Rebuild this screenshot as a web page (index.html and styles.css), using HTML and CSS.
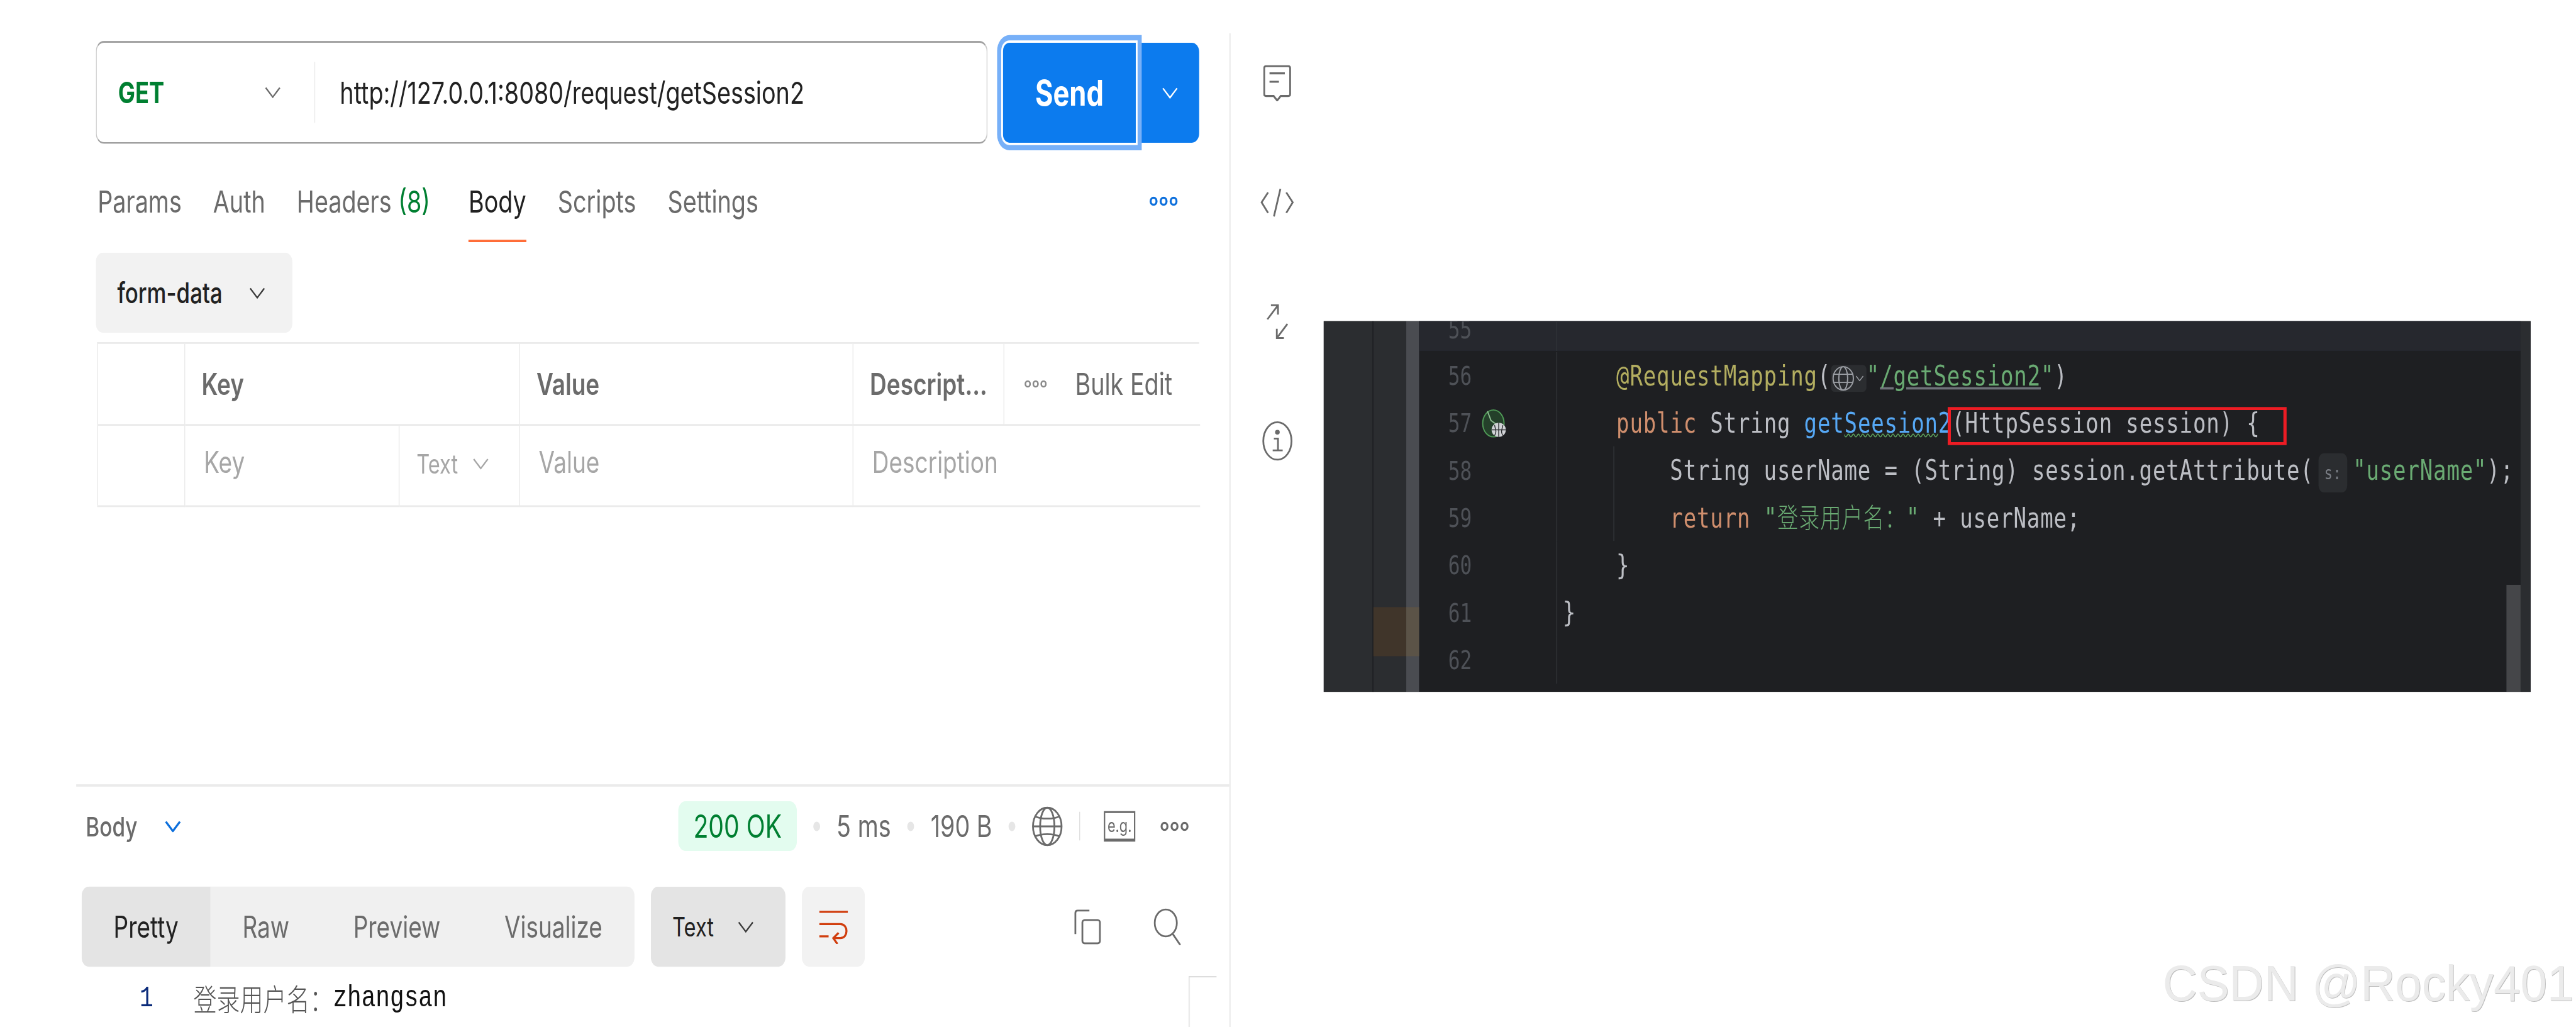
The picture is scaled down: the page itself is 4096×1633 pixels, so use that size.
FILE: index.html
```html
<!DOCTYPE html>
<html lang="zh">
<head>
<meta charset="utf-8">
<title>Postman request and IDE code</title>
<link rel="stylesheet" href="styles.css">
</head>
<body>
<div class="stage">
  <div class="sheet">
    <main class="left">
      <section class="request">
        <div class="urlbar">
          <div class="method"><span class="get">GET</span><svg class="chev" viewBox="0 0 28 20" preserveAspectRatio="none"><path d="M2 2 14 18 26 2"/></svg></div>
          <div class="url">http://127.0.0.1:8080/request/getSession2</div>
        </div>
        <div class="send-group">
          <button class="send">Send</button>
          <button class="send-caret"><svg class="chev chev-white" viewBox="0 0 28 20" preserveAspectRatio="none"><path d="M2 2 14 18 26 2"/></svg></button>
        </div>
      </section>

      <nav class="tabs">
        <span class="tab">Params</span>
        <span class="tab">Auth</span>
        <span class="tab tab-headers">Headers <span class="count">(8)</span></span>
        <span class="tab tab-active">Body</span>
        <span class="tab">Scripts</span>
        <span class="tab">Settings</span>
        <svg class="dots dots-blue tabs-more" viewBox="0 0 48 16" preserveAspectRatio="none"><ellipse cx="7" cy="8" rx="5" ry="6"/><ellipse cx="24" cy="8" rx="5" ry="6"/><ellipse cx="41" cy="8" rx="5" ry="6"/></svg>
      </nav>

      <div class="formdata"><span>form-data</span><svg class="chev chev-dark" viewBox="0 0 28 20" preserveAspectRatio="none"><path d="M2 2 14 18 26 2"/></svg></div>

      <div class="kv">
        <div class="cell"></div>
        <div class="cell span2 head">Key</div>
        <div class="cell head">Value</div>
        <div class="cell head">Descript...</div>
        <div class="cell bulk"><svg class="dots dots-small" viewBox="0 0 48 16" preserveAspectRatio="none"><ellipse cx="7" cy="8" rx="5" ry="6"/><ellipse cx="24" cy="8" rx="5" ry="6"/><ellipse cx="41" cy="8" rx="5" ry="6"/></svg><span>Bulk Edit</span></div>
        <div class="cell"></div>
        <div class="cell ph">Key</div>
        <div class="cell ph-type"><span>Text</span><svg class="chev chev-light" viewBox="0 0 28 20" preserveAspectRatio="none"><path d="M2 2 14 18 26 2"/></svg></div>
        <div class="cell ph">Value</div>
        <div class="cell span2 ph">Description</div>
      </div>

      <section class="response">
        <div class="status-row">
          <span class="res-body">Body</span>
          <svg class="chev chev-blue" viewBox="0 0 28 20" preserveAspectRatio="none"><path d="M2 2 14 18 26 2"/></svg>
          <div class="status">
            <span class="pill">200 OK</span>
            <i class="sep-dot"></i>
            <span>5 ms</span>
            <i class="sep-dot"></i>
            <span>190 B</span>
            <i class="sep-dot"></i>
            <svg class="globe" viewBox="0 0 52 68" preserveAspectRatio="none"><ellipse cx="26" cy="34" rx="24" ry="32"/><ellipse cx="26" cy="34" rx="12" ry="32"/><path d="M6 17C16 22 36 22 46 17M6 51C16 46 36 46 46 51M2 34H50"/></svg>
            <i class="vsep"></i>
            <span class="eg">e.g.</span>
            <svg class="dots dots-gray" viewBox="0 0 48 16" preserveAspectRatio="none"><ellipse cx="7" cy="8" rx="5" ry="6"/><ellipse cx="24" cy="8" rx="5" ry="6"/><ellipse cx="41" cy="8" rx="5" ry="6"/></svg>
          </div>
        </div>
        <div class="toolbar">
          <div class="modes">
            <span class="mode mode-active">Pretty</span>
            <span class="mode">Raw</span>
            <span class="mode">Preview</span>
            <span class="mode">Visualize</span>
          </div>
          <div class="lang"><span>Text</span><svg class="chev chev-dark" viewBox="0 0 28 20" preserveAspectRatio="none"><path d="M2 2 14 18 26 2"/></svg></div>
          <div class="wrap-btn"><svg class="wrap-icon" viewBox="0 0 49 59" preserveAspectRatio="none"><path d="M0 4H49M0 25H36C50 25 50 49 36 49H24M33 40 24 49 31 59M0 46H16"/></svg></div>
          <svg class="copy" viewBox="0 0 46 60" preserveAspectRatio="none"><path d="M26 2H6C3 2 2 4 2 6V42"/><rect x="14" y="18" width="30" height="40" rx="4"/></svg>
          <svg class="search" viewBox="0 0 47 63" preserveAspectRatio="none"><ellipse cx="21" cy="25" rx="19" ry="23"/><path d="M33 44 46 63"/></svg>
        </div>
        <div class="output">
          <span class="ln">1</span><span class="out-cjk">登录用户名：</span><span class="out-text">zhangsan</span>
        </div>
        <i class="corner"></i>
      </section>
    </main>

    <aside class="side">
      <div class="side-cell"><svg class="i-comment" viewBox="0 0 48 56" preserveAspectRatio="none"><path d="M5 2H43C45 2 46 3 46 5V45C46 47 45 48 43 48H30L24 55 18 48H5C3 48 2 47 2 45V5C2 3 3 2 5 2ZM11 13H37M11 26H27"/></svg></div>
      <div class="side-cell"><svg class="i-code" viewBox="0 0 59 51" preserveAspectRatio="none"><path d="M14 8 3 25 14 43M45 8 56 25 45 43M35 2 24 49"/></svg></div>
      <div class="side-cell"><svg class="i-expand" viewBox="0 0 38 60" preserveAspectRatio="none"><path d="M2 26 20 2M8 2H20V18M36 34 18 58M30 58H18V42"/></svg></div>
      <div class="side-cell"><svg class="i-info" viewBox="0 0 52 68" preserveAspectRatio="none"><ellipse cx="26" cy="34" rx="24" ry="32"/><path d="M20 30H27V50M18 50H35"/><circle cx="26" cy="19" r="2.5"/></svg></div>
    </aside>

    <section class="ide">
      <div class="ide-tool"></div>
      <div class="ide-gut"><div class="mark-a"></div></div>
      <div class="ide-fold"><div class="mark-b"></div></div>
      <div class="editor">
        <div class="row row-current"><span class="num">55</span><span class="code"></span></div>
        <div class="row"><span class="num">56</span><span class="code">    <span class="ann">@RequestMapping</span>(<span class="chip"><svg class="chip-globe" viewBox="0 0 36 44" preserveAspectRatio="none"><ellipse cx="18" cy="22" rx="16" ry="20"/><ellipse cx="18" cy="22" rx="7" ry="20"/><path d="M2 15H34M2 29H34"/></svg><svg class="chip-chev" viewBox="0 0 28 20" preserveAspectRatio="none"><path d="M2 2 14 18 26 2"/></svg></span><span class="str">"<span class="link">/getSession2</span>"</span>)</span></div>
        <div class="row"><span class="num">57<svg class="run" viewBox="0 0 40 50" preserveAspectRatio="none"><ellipse class="run-c" cx="20" cy="25" rx="18" ry="23"/><path class="run-l" d="M10 4 16 20 30 30"/><circle class="run-g" cx="29" cy="36" r="12"/><path class="run-k" d="M17 36H41M29 24V48M22 28C25 40 25 40 22 46M36 28C33 40 33 40 36 46"/></svg></span><span class="code">    <span class="kw">public</span> String <span class="fn">get<span class="wavy">Seesion</span>2</span>(HttpSession session) {</span></div>
        <div class="row"><span class="num">58</span><span class="code">        String userName = (String) session.getAttribute(<span class="hint">s:</span><span class="str">"userName"</span>);</span></div>
        <div class="row"><span class="num">59</span><span class="code">        <span class="kw">return</span> <span class="str">"<span class="code-cjk">登录用户名：</span>"</span> + userName;</span></div>
        <div class="row"><span class="num">60</span><span class="code">    }</span></div>
        <div class="row"><span class="num">61</span><span class="code">}</span></div>
        <div class="row"><span class="num">62</span><span class="code"></span></div>
        <i class="scroll-thumb"></i>
      </div>
      <div class="ide-strip"></div>
      <i class="guide"></i>
      <i class="redbox"></i>
    </section>
  </div>
  <div class="watermark">CSDN @Rocky401</div>
</div>
</body>
</html>
```

FILE: styles.css
```css
* { box-sizing: border-box; }
html, body { margin: 0; padding: 0; background: #fff; overflow: hidden; }
.stage { position: relative; width: 4096px; height: 1633px; overflow: hidden; background: #fff; }

/* the capture is squeezed horizontally: lay out at natural width, then scale the sheet */
.sheet {
  display: flex;
  width: 5648px;
  height: 1756px;
  transform: scale(0.72528, 0.92995);
  transform-origin: 0 0;
  font-family: Inter, "Noto Sans CJK SC", sans-serif;
  font-size: 52px;
  color: #6b6b6b;
}

svg { display: block; fill: none; stroke: #6b6b6b; stroke-width: 3; flex: none; }

.chev { width: 36px; height: 20px; stroke-width: 2.5; }
.chev-white { stroke: #fff; }
.chev-dark { stroke: #3a3a3a; }
.chev-light { stroke: #a6a6a6; }
.chev-blue { stroke: #0c6fdc; stroke-width: 3.5; }

.dots { width: 62px; height: 16px; stroke-width: 3.5; }
.dots-blue { stroke: #0c6fdc; }
.dots-small { stroke: #8a8a8a; width: 49px; height: 13px; }
.dots-gray { stroke: #6b6b6b; }

/* left column */
.left {
  width: 2698px;
  height: 1699px;
  margin-top: 57px;
  padding-top: 13px;
  border-right: 3px solid #ebebeb;
  display: flex;
  flex-direction: column;
  flex: none;
}

.request { display: flex; gap: 34px; margin-left: 210px; width: 2419px; height: 176px; }
.urlbar {
  display: flex;
  align-items: center;
  width: 1955px;
  height: 176px;
  border: 2px solid #c8c8c8;
  border-top: 3px solid #a0a0a0;
  border-bottom: 3px solid #a0a0a0;
  border-radius: 18px;
}
.method {
  display: flex;
  align-items: center;
  justify-content: space-between;
  width: 479px;
  height: 104px;
  padding: 0 73px 0 47px;
  border-right: 2px solid #ebebeb;
}
.get { color: #007f31; font-weight: 700; font-size: 50px; }
.url { padding-left: 54px; color: #212121; font-size: 52px; white-space: nowrap; }

.send-group { display: flex; gap: 11px; padding-top: 3px; }
.send {
  position: relative;
  z-index: 1;
  width: 291px;
  height: 171px;
  border: 0;
  border-radius: 14px 0 0 14px;
  background: #0c7bee;
  color: #fff;
  font: 700 60px Inter, sans-serif;
  box-shadow: 0 0 0 4px #fff, 0 0 0 13px #77b0f8;
}
.send-caret {
  display: flex;
  align-items: center;
  justify-content: center;
  width: 128px;
  height: 171px;
  padding: 0 0 0 0;
  border: 0;
  border-radius: 0 16px 16px 0;
  background: #0c7bee;
}

.tabs { display: flex; align-items: flex-start; gap: 69px; margin: 38px 0 0 214px; padding-right: 113px; height: 130px; }
.tab { height: 130px; padding-top: 31px; line-height: 60px; white-space: nowrap; border-bottom: 4px solid transparent; }
.tab-headers { margin-right: 15px; }
.tab-active { color: #212121; border-bottom-color: #ff6c37; }
.count { color: #007f31; }
.tabs-more { margin: 52px 0 0 auto; }

.formdata {
  display: flex;
  align-items: center;
  gap: 58px;
  width: 431px;
  height: 137px;
  margin: 18px 0 0 210px;
  padding-left: 47px;
  border-radius: 16px;
  background: #f2f2f2;
  color: #212121;
  font-size: 48px;
  font-weight: 500;
}

.kv {
  display: grid;
  grid-template-columns: 191px 470px 264px 731px 331px 429px;
  grid-template-rows: 140px 139px;
  width: 2416px;
  margin: 16px 0 0 213px;
  border-top: 3px solid #ebebeb;
  border-left: 2px solid #ebebeb;
}
.cell {
  display: flex;
  align-items: center;
  padding-left: 36px;
  border-right: 2px solid #ebebeb;
  border-bottom: 3px solid #ebebeb;
  white-space: nowrap;
}
.cell:nth-child(5), .cell:last-child { border-right: 0; }
.span2 { grid-column: span 2; }
.head { font-weight: 600; font-size: 51px; }
.bulk { gap: 62px; padding-left: 44px; }
.ph { padding: 0 0 12px 41px; color: #a6a6a6; font-size: 51px; }
.ph-type { padding: 0 0 6px 37px; gap: 32px; color: #a6a6a6; font-size: 45px; }

/* response */
.response {
  position: relative;
  height: 415px;
  margin: auto 0 0 167px;
  padding: 25px 89px 0 0;
  border-top: 4px solid #ebebeb;
}
.status-row { display: flex; align-items: center; height: 85px; }
.res-body { margin-left: 21px; font-size: 46px; font-weight: 500; }
.status-row > .chev { margin-left: 60px; }
.status { display: flex; align-items: center; gap: 36px; margin-left: auto; font-size: 52px; }
.pill {
  display: flex;
  align-items: center;
  justify-content: center;
  width: 260px;
  height: 85px;
  border-radius: 16px;
  background: #e3fcef;
  color: #007f31;
  font-size: 54px;
}
.sep-dot { width: 15px; height: 16px; border-radius: 50%; background: #e6e6e6; }
.globe { width: 68px; height: 68px; stroke-width: 3; }
.vsep { width: 2px; height: 49px; background: #e0e0e0; margin-right: 16px; }
.eg {
  display: flex;
  align-items: center;
  justify-content: center;
  width: 69px;
  height: 52px;
  border: 3px solid #6b6b6b;
  border-bottom-width: 5px;
  font-size: 30px;
  margin-right: 19px;
}

.toolbar { display: flex; align-items: center; gap: 36px; height: 137px; margin: 61px -89px 0 12px; padding-right: 106px; }
.modes { display: flex; width: 1212px; height: 137px; background: #f0f0f0; border-radius: 16px; overflow: hidden; flex: none; }
.mode { display: flex; align-items: center; padding: 0 70px; white-space: nowrap; font-size: 51px; }
.mode-active { background: #e4e4e4; color: #212121; }
.lang {
  display: flex;
  align-items: center;
  gap: 52px;
  width: 295px;
  height: 137px;
  padding-left: 47px;
  border-radius: 16px;
  background: #e4e4e4;
  color: #212121;
  font-size: 45px;
  flex: none;
}
.wrap-btn { display: flex; align-items: center; justify-content: center; width: 138px; height: 137px; border-radius: 16px; background: #f2f2f2; flex: none; }
.wrap-icon { width: 63px; height: 59px; stroke: #d13e0e; stroke-width: 3.5; }
.copy { width: 59px; height: 60px; margin-left: auto; stroke-width: 3; }
.search { width: 60px; height: 63px; margin-left: 79px; stroke-width: 3; }

.output { display: flex; align-items: center; height: 60px; margin: 23px 0 0 139px; white-space: nowrap; }
.ln { width: 118px; font: 50px "Liberation Mono", monospace; color: #0a2a7a; }
.out-cjk { font: 300 51px "Noto Sans CJK SC", sans-serif; color: #555; }
.out-text { font: 52px "Liberation Mono", monospace; color: #111; }
.corner { position: absolute; left: 2439px; top: 324px; width: 61px; height: 100px; border-top: 2px solid #dcdcdc; border-left: 2px solid #dcdcdc; }

/* icon rail */
.side { width: 204px; padding-top: 40px; flex: none; }
.side-cell { display: flex; align-items: center; justify-content: center; height: 204px; }
.i-comment { width: 62px; height: 62px; }
.i-code { width: 76px; height: 51px; }
.i-expand { width: 49px; height: 60px; }
.i-info { width: 67px; height: 68px; }
.i-info circle { fill: #6b6b6b; }

/* IDE shot */
.ide {
  position: relative;
  display: flex;
  width: 2646px;
  height: 634px;
  margin-top: 549px;
  overflow: hidden;
  background: #1e1f22;
  flex: none;
}
.ide-tool { width: 109px; background: #2b2d30; border-right: 2px solid #1a1b1e; flex: none; }
.ide-gut { position: relative; width: 72px; background: #2b2d30; flex: none; }
.ide-fold { position: relative; width: 28px; background: #4a4c51; flex: none; }
.mark-a, .mark-b { position: absolute; left: 0; right: 0; top: 489px; height: 84px; }
.mark-a { background: #40352a; }
.mark-b { background: #5b5347; }
.editor { position: relative; flex: 1; margin-top: -22px; padding-top: 0; }
.ide-strip { width: 22px; background: #2b2d30; flex: none; }

.row { display: flex; height: 81px; align-items: center; white-space: pre; }
.row-current { height: 73px; margin-bottom: 2px; background: #26282e; }
.num {
  display: flex;
  align-items: center;
  width: 303px;
  height: 100%;
  padding-left: 64px;
  border-right: 2px solid #313438;
  color: #4e5157;
  font: 43px "DejaVu Sans Mono", monospace;
  flex: none;
}
.code {
  padding-left: 12px;
  color: #bcbec4;
  font: 47px/81px "DejaVu Sans Mono", "Noto Sans CJK SC", monospace;
  letter-spacing: 1.1px;
  white-space: pre;
  height: 81px;
}
.ann { color: #b3ae60; }
.kw { color: #cf8e6d; }
.fn { color: #56a8f5; }
.str { color: #6aab73; }
.link { text-decoration: underline; text-decoration-color: #6f737a; }
.wavy { text-decoration: underline wavy #5a9e5a 2px; }
.chip {
  display: inline-flex;
  align-items: center;
  gap: 2px;
  width: 78px;
  height: 46px;
  padding: 0 2px;
  vertical-align: middle;
  border-radius: 8px;
  background: #2b2d30;
}
.chip-globe { width: 50px; height: 44px; stroke: #9a9da3; stroke-width: 2; }
.chip-chev { width: 18px; height: 10px; stroke: #9a9da3; stroke-width: 3; }
.hint {
  display: inline-block;
  width: 63px;
  height: 67px;
  margin: 0 12px 0 11px;
  vertical-align: middle;
  border-radius: 12px;
  background: #2b2d30;
  color: #7a7e85;
  font-size: 30px;
  line-height: 67px;
  text-align: center;
}
.code-cjk { font: 300 46px/1 "Noto Sans CJK SC", sans-serif; }
.run { width: 52px; height: 50px; margin-left: 21px; overflow: visible; stroke-width: 2; }
.run-c { fill: #24402a; stroke: #4f9a56; }
.run-l { stroke: #8fbf92; }
.run-g { fill: #d0d2d6; stroke: none; }
.run-k { stroke: #2b2d30; stroke-width: 1.5; }
.scroll-thumb { position: absolute; right: 0; top: 473px; bottom: 0; width: 31px; background: #454649; }
.guide { position: absolute; left: 635px; top: 214px; width: 2px; height: 162px; background: #313438; }
.redbox { position: absolute; left: 1368px; top: 147px; width: 743px; height: 65px; border: 5px solid #ed1c24; border-left-width: 7px; border-right-width: 7px; }

.watermark {
  position: absolute;
  right: 4px;
  top: 1519px;
  font: 79px/90px "Liberation Sans", sans-serif;
  color: #ebebeb;
  text-shadow: 1px 1px 0 #bdbdbd;
  white-space: nowrap;
  transform: scaleX(0.965);
  transform-origin: right center;
}
```
